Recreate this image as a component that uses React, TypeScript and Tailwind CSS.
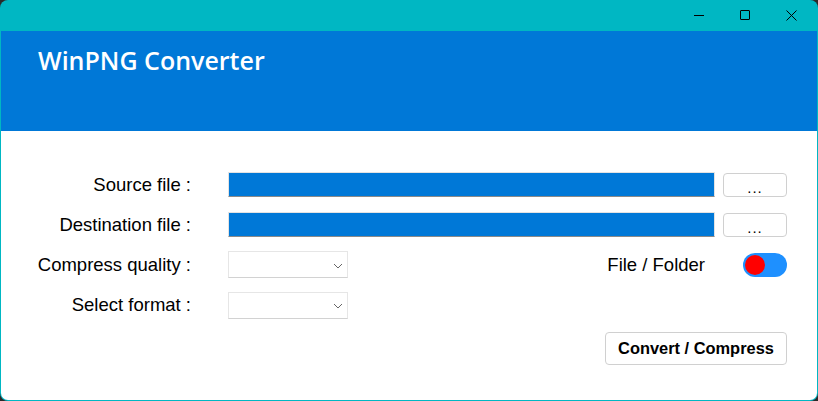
import React from "react";

function TextBox() {
  return (
    <div className="w-[487px] h-[25px] border border-[#e3e3e3] border-b-[#8a8a8a] bg-[#0078d7]" />
  );
}

function DotsButton() {
  return (
    <div className="ml-[8px] w-[64px] h-[24px] rounded-[4px] border border-[#d0d0d0] bg-white flex items-end justify-center pb-[1px] text-[15px] leading-[15px] tracking-[1px] text-black">
      ...
    </div>
  );
}

function Combo() {
  return (
    <div className="w-[120px] h-[27px] border border-[#e6e6e6] border-b-[#d2d2d2] bg-white flex items-center justify-end pr-[4px]">
      <svg width="10" height="6" viewBox="0 0 10 6" className="mt-[2px]">
        <path d="M1 1 L5 5 L9 1" fill="none" stroke="#666" strokeWidth="1" />
      </svg>
    </div>
  );
}

export default function App() {
  return (
    <div
      className="w-[818px] h-[401px] bg-[#2a2a2a] overflow-hidden"
      style={{ fontFamily: '"Liberation Sans", Arial, sans-serif' }}
    >
      <div className="w-full h-full rounded-[8px] bg-[#00b7c3] p-[1px] pt-0 flex flex-col overflow-hidden">
        {/* title bar */}
        <div className="h-[31px] flex items-start justify-end shrink-0">
          <div className="flex items-center h-[30px]">
            <div className="w-[46px] h-[30px] flex items-center justify-center">
              <div className="w-[10px] h-[1px] bg-black" />
            </div>
            <div className="w-[46px] h-[30px] flex items-center justify-center">
              <div className="w-[10px] h-[10px] border border-black rounded-[1px]" />
            </div>
            <div className="w-[46px] h-[30px] flex items-center justify-center mr-[3px]">
              <svg width="11" height="11" viewBox="0 0 11 11">
                <path d="M0.5 0.5 L10.5 10.5 M10.5 0.5 L0.5 10.5" stroke="#000" strokeWidth="1" />
              </svg>
            </div>
          </div>
        </div>
        {/* header */}
        <div className="h-[100px] bg-[#0078d7] shrink-0 pl-[37px] pt-[13px]">
          <div
            className="text-white text-[25px] leading-[32px] font-semibold"
            style={{ fontFamily: '"Open Sans", "Noto Sans", sans-serif' }}
          >
            WinPNG Converter
          </div>
        </div>
        {/* content */}
        <div className="flex-1 bg-white rounded-b-[7px] pt-[41px] text-[18.5px] text-black">
          <div className="flex items-center h-[25px]">
            <div className="w-[190px] text-right whitespace-nowrap">Source file :</div>
            <div className="ml-[37px] flex items-center">
              <TextBox />
              <DotsButton />
            </div>
          </div>
          <div className="flex items-center h-[25px] mt-[15px]">
            <div className="w-[190px] text-right whitespace-nowrap">Destination file :</div>
            <div className="ml-[37px] flex items-center">
              <TextBox />
              <DotsButton />
            </div>
          </div>
          <div className="flex items-center h-[27px] mt-[14px] pr-[30px]">
            <div className="w-[190px] text-right whitespace-nowrap">Compress quality :</div>
            <div className="ml-[37px]">
              <Combo />
            </div>
            <div className="flex-1" />
            <div className="whitespace-nowrap">File / Folder</div>
            <div className="ml-[38px] w-[44px] h-[24px] rounded-full bg-[#1e90ff] flex items-center pl-[2px]">
              <div className="w-[20px] h-[20px] rounded-full bg-[#ff0000]" />
            </div>
          </div>
          <div className="flex items-center h-[28px] mt-[13px]">
            <div className="w-[190px] text-right whitespace-nowrap">Select format :</div>
            <div className="ml-[37px]">
              <Combo />
            </div>
          </div>
          <div className="flex justify-end pr-[30px] mt-[13px]">
            <div className="w-[182px] h-[33px] rounded-[4px] border border-[#d0d0d0] flex items-center justify-center font-bold text-[16.4px]">
              Convert / Compress
            </div>
          </div>
        </div>
      </div>
    </div>
  );
}
